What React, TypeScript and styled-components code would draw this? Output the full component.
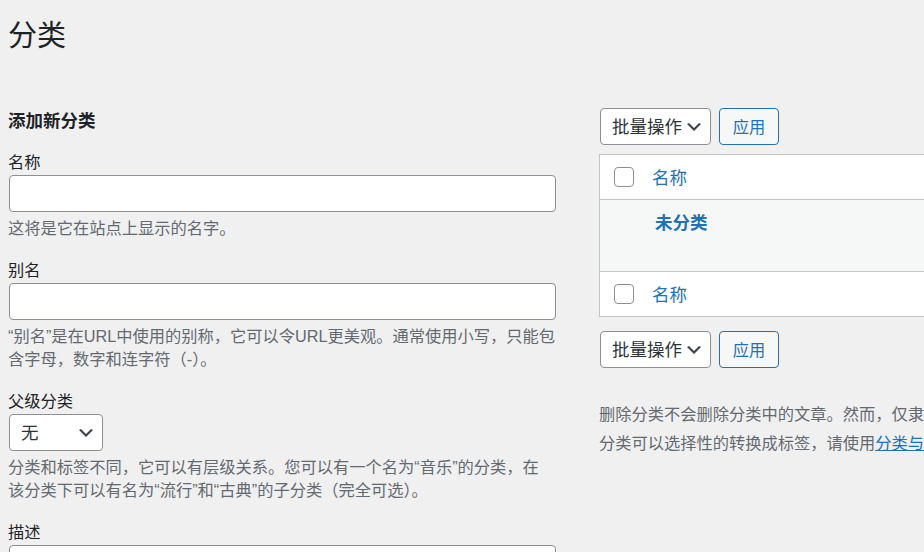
import React from 'react'
import styled, { createGlobalStyle } from 'styled-components'

const GlobalStyle = createGlobalStyle`
  html, body {
    margin: 0;
    padding: 0;
    background: #f0f0f1;
    overflow: hidden;
  }
  body {
    font-family: "Liberation Sans", "Noto Sans CJK SC", sans-serif;
    color: #3c434a;
  }
`

const Page = styled.div`
  padding: 18px 0 0 8px;
  width: 1400px;
`

const Title = styled.h1`
  margin: 0;
  font-size: 29px;
  line-height: 36px;
  font-weight: 400;
  color: #1d2327;
`

const Columns = styled.div`
  display: flex;
  align-items: flex-start;
  gap: 43px;
  margin-top: 54px;
`

const LeftCol = styled.div`
  width: 548px;
  flex: none;
`

const RightCol = styled.div`
  width: 700px;
  flex: none;
`

const SectionTitle = styled.h2`
  margin: 1px 0 18px;
  font-size: 17.5px;
  line-height: 24px;
  font-weight: 700;
  color: #1d2327;
`

const Field = styled.div`
  margin-bottom: 19px;
`

const Label = styled.label`
  display: block;
  font-size: 16.25px;
  line-height: 22px;
  margin-bottom: 2px;
  color: #1d2327;
`

const TextInput = styled.input`
  display: block;
  box-sizing: border-box;
  width: 547px;
  height: 37px;
  margin: 0 0 0 1px;
  padding: 0 10px;
  border: 1px solid #8c8f94;
  border-radius: 4px;
  background: #fff;
  font: inherit;
  font-size: 17.5px;
  outline: none;
`

const TextArea = styled.textarea`
  display: block;
  box-sizing: border-box;
  width: 547px;
  height: 100px;
  margin: 0 0 0 1px;
  border: 1px solid #8c8f94;
  border-radius: 4px;
  background: #fff;
  resize: none;
  outline: none;
`

const Help = styled.p`
  margin: 5px 0 0;
  font-size: 16.25px;
  line-height: 23px;
  color: #646970;
`

const SelectBox = styled.div<{ width: number }>`
  box-sizing: border-box;
  width: ${p => p.width}px;
  height: 37px;
  margin-left: 1px;
  padding-left: 11px;
  border: 1px solid #8c8f94;
  border-radius: 4px;
  background: #fff;
  display: flex;
  align-items: center;
  justify-content: space-between;
  font-size: 17.5px;
  line-height: 24px;
  color: #2c3338;
  flex: none;
`

const Chevron = styled.svg`
  width: 20px;
  height: 20px;
  margin-right: 6px;
  fill: #3c434a;
`

const Tablenav = styled.div`
  display: flex;
  gap: 8px;
  height: 37px;
`

const ApplyButton = styled.button`
  box-sizing: border-box;
  width: 60px;
  height: 37px;
  padding: 0;
  border: 1px solid #2271b1;
  border-radius: 4px;
  background: #f6f7f7;
  color: #2271b1;
  font: inherit;
  font-size: 16.25px;
  line-height: 24px;
`

const Table = styled.div`
  margin: 9px 0 14px;
  border: 1px solid #c3c4c7;
  background: #fff;
`

const Row = styled.div<{ kind: 'head' | 'body' | 'foot' }>`
  display: flex;
  align-items: ${p => (p.kind === 'body' ? 'flex-start' : 'center')};
  height: ${p => (p.kind === 'body' ? 71 : 45)}px;
  box-sizing: border-box;
  padding-top: ${p => (p.kind === 'body' ? 11 : 0)}px;
  background: ${p => (p.kind === 'body' ? '#f6f7f7' : '#fff')};
  border-top: ${p => (p.kind === 'foot' ? '1px solid #c3c4c7' : 'none')};
  border-bottom: ${p => (p.kind === 'head' ? '1px solid #c3c4c7' : 'none')};
`

const CheckCell = styled.div`
  width: 44px;
  box-sizing: border-box;
  padding-left: 14px;
  flex: none;
  display: flex;
`

const Checkbox = styled.span`
  width: 20px;
  height: 20px;
  box-sizing: border-box;
  border: 1px solid #8c8f94;
  border-radius: 4px;
  background: #fff;
`

const ColumnName = styled.span`
  padding: 2px 0 0 8px;
  font-size: 17.5px;
  line-height: 24px;
  color: #2271b1;
`

const RowTitle = styled.strong`
  padding-left: 11px;
  font-size: 17.5px;
  line-height: 24px;
  font-weight: 700;
  color: #2271b1;
`

const Notes = styled.div`
  margin-top: 32px;
`

const Note = styled.p`
  margin: 0;
  font-size: 16.25px;
  line-height: 29px;
  color: #646970;
  white-space: nowrap;
`

const Link = styled.a`
  color: #2271b1;
  text-decoration: underline;
`

const ArrowDown = () => (
  <Chevron viewBox="0 0 20 20">
    <path d="M5 6l5 5 5-5 2 1-7 7-7-7 2-1z" />
  </Chevron>
)

const BulkActions = () => (
  <Tablenav>
    <SelectBox width={111}>
      批量操作
      <ArrowDown />
    </SelectBox>
    <ApplyButton>应用</ApplyButton>
  </Tablenav>
)

export default function App() {
  return (
    <Page>
      <GlobalStyle />
      <Title>分类</Title>
      <Columns>
        <LeftCol>
          <SectionTitle>添加新分类</SectionTitle>
          <Field>
            <Label>名称</Label>
            <TextInput type="text" />
            <Help>这将是它在站点上显示的名字。</Help>
          </Field>
          <Field>
            <Label>别名</Label>
            <TextInput type="text" />
            <Help>
              “别名”是在URL中使用的别称，它可以令URL更美观。通常使用小写，只能包
              <br />
              含字母，数字和连字符（-）。
            </Help>
          </Field>
          <Field>
            <Label>父级分类</Label>
            <SelectBox width={94}>
              无
              <ArrowDown />
            </SelectBox>
            <Help>
              分类和标签不同，它可以有层级关系。您可以有一个名为“音乐”的分类，在
              <br />
              该分类下可以有名为“流行”和“古典”的子分类（完全可选）。
            </Help>
          </Field>
          <Field>
            <Label>描述</Label>
            <TextArea />
          </Field>
        </LeftCol>
        <RightCol>
          <BulkActions />
          <Table>
            <Row kind="head">
              <CheckCell>
                <Checkbox />
              </CheckCell>
              <ColumnName>名称</ColumnName>
            </Row>
            <Row kind="body">
              <CheckCell />
              <RowTitle>未分类</RowTitle>
            </Row>
            <Row kind="foot">
              <CheckCell>
                <Checkbox />
              </CheckCell>
              <ColumnName>名称</ColumnName>
            </Row>
          </Table>
          <BulkActions />
          <Notes>
            <Note>删除分类不会删除分类中的文章。然而，仅隶属于被删除分类的文章会被指定为未分类。</Note>
            <Note>
              分类可以选择性的转换成标签，请使用<Link href="#">分类与标签转换器</Link>。
            </Note>
          </Notes>
        </RightCol>
      </Columns>
    </Page>
  )
}
